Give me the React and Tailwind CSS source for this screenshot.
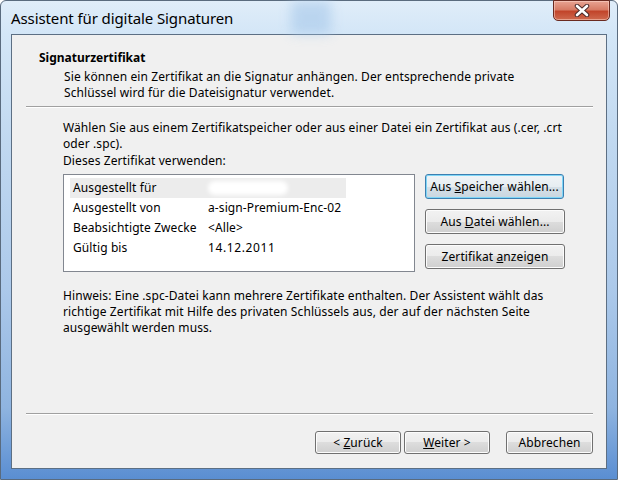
import React from "react";

const font = { fontFamily: '"Noto Sans", "Open Sans", sans-serif' };

function Btn({ children, className = "", focused = false }) {
  return (
    <div
      className={
        "flex items-center justify-center rounded-[3px] border text-[12px] text-black " +
        (focused
          ? "border-[#3c7fb1] shadow-[inset_0_0_0_1px_#7fd6f7] bg-[linear-gradient(#f0f4f7_0%,#e6edf2_50%,#d5e0e8_50%,#cad6df_100%)] "
          : "border-[#707070] shadow-[inset_0_0_0_1px_#fcfcfc] bg-[linear-gradient(#f2f2f2_0%,#ebebeb_50%,#dddddd_50%,#cfcfcf_100%)] ") +
        className
      }
    >
      {children}
    </div>
  );
}

export default function App() {
  return (
    <div className="w-[618px] h-[480px] overflow-hidden bg-white" style={font}>
      <div className="relative w-[618px] h-[480px] rounded-t-[6px] border border-[#5a6b7e] bg-[linear-gradient(180deg,#e0edf9_0%,#d3e6f7_7%,#c0d8f0_30%,#acc9ea_60%,#8fb4e0_85%,#5a8ed2_100%)] flex flex-col">
        {/* title bar */}
        <div className="h-[33px] flex items-start pl-[10px] pt-[7px] relative">
          <span className="text-[15px] text-black leading-[20px] tracking-[-0.1px]">
            Assistent für digitale Signaturen
          </span>
          <div className="absolute left-[290px] top-0 w-[40px] h-[33px] bg-[#a6c8ea] opacity-60 blur-[6px]" />
          <div className="absolute left-[552px] top-[-1px] w-[57px] h-[21px] rounded-b-[5px] border border-[#6a2a20] bg-[linear-gradient(180deg,#e8a493_0%,#d77c66_45%,#c2452b_55%,#cf6a4f_100%)] flex items-center justify-center shadow-[inset_0_0_0_1px_rgba(255,220,210,0.5)]">
            <svg width="18" height="13" viewBox="0 0 18 13">
              <path d="M4 2 L14 11 M14 2 L4 11" stroke="#4a2a2a" strokeWidth="4.5" strokeLinecap="round" />
              <path d="M4 2 L14 11 M14 2 L4 11" stroke="#ffffff" strokeWidth="2.6" strokeLinecap="round" />
            </svg>
          </div>
        </div>
        {/* client */}
        <div className="flex-1 mx-[10px] mb-[10px] border border-[#5c6f84] bg-[#f0f0f0] flex flex-col text-[12px] leading-[16px] text-black tracking-[0.1px]">
          <div className="pl-[14px] pr-[13px]">
            <div className="pt-[15px] pl-[13px] font-bold text-[12px] leading-[15px] tracking-normal">
              Signaturzertifikat
            </div>
            <div className="pl-[38px] pt-[4px] pb-[5px]">
              Sie können ein Zertifikat an die Signatur anhängen. Der entsprechende private
              <br />
              Schlüssel wird für die Dateisignatur verwendet.
            </div>
            <div className="h-[2px] border-t border-[#a0a0a0] border-b border-b-white" />
          </div>
          <div className="pl-[51px] pr-[40px] pt-[12px]">
            <div>
              Wählen Sie aus einem Zertifikatspeicher oder aus einer Datei ein Zertifikat aus (.cer, .crt
              <br />
              oder .spc).
            </div>
            <div className="pt-[1px]">Dieses Zertifikat verwenden:</div>
            <div className="flex gap-[10px] mt-[5px]">
              <div className="w-[352px] h-[98px] border border-[#828790] bg-white px-[6px] pt-[3px]">
                <div className="grid grid-cols-[135px_1fr] h-[20px] items-center w-[276px] bg-[#ececec] pl-[3px]">
                  <span>Ausgestellt für</span>
                  <span className="w-[80px] h-[14px] bg-white rounded-full blur-[2px]" />
                </div>
                <div className="grid grid-cols-[135px_1fr] h-[20px] items-center pl-[3px]">
                  <span>Ausgestellt von</span>
                  <span>a-sign-Premium-Enc-02</span>
                </div>
                <div className="grid grid-cols-[135px_1fr] h-[20px] items-center pl-[3px]">
                  <span>Beabsichtigte Zwecke</span>
                  <span>&lt;Alle&gt;</span>
                </div>
                <div className="grid grid-cols-[135px_1fr] h-[20px] items-center pl-[3px]">
                  <span>Gültig bis</span>
                  <span className="tracking-[0.6px]">14.12.2011</span>
                </div>
              </div>
              <div className="flex flex-col gap-[10px]">
                <Btn focused className="w-[139px] h-[25px]">
                  <span>
                    Aus <u>S</u>peicher wählen...
                  </span>
                </Btn>
                <Btn className="w-[140px] h-[25px]">
                  <span>
                    Aus <u>D</u>atei wählen...
                  </span>
                </Btn>
                <Btn className="w-[140px] h-[25px]">
                  <span>
                    Zertifikat <u>a</u>nzeigen
                  </span>
                </Btn>
              </div>
            </div>
            <div className="pt-[16px]">
              Hinweis: Eine .spc-Datei kann mehrere Zertifikate enthalten. Der Assistent wählt das
              <br />
              richtige Zertifikat mit Hilfe des privaten Schlüssels aus, der auf der nächsten Seite
              <br />
              ausgewählt werden muss.
            </div>
          </div>
          <div className="flex-1" />
          <div className="pl-[14px] pr-[13px]">
            <div className="h-[2px] border-t border-[#a0a0a0] border-b border-b-white" />
          </div>
          <div className="flex justify-end pr-[13px] pt-[16px] pb-[14px]">
            <Btn className="w-[86px] h-[23px]">
              <span>
                &lt; <u>Z</u>urück
              </span>
            </Btn>
            <Btn className="w-[86px] h-[23px] ml-[3px]">
              <span>
                <u>W</u>eiter &gt;
              </span>
            </Btn>
            <Btn className="w-[87px] h-[23px] ml-[16px]">
              <span>Abbrechen</span>
            </Btn>
          </div>
        </div>
      </div>
    </div>
  );
}
